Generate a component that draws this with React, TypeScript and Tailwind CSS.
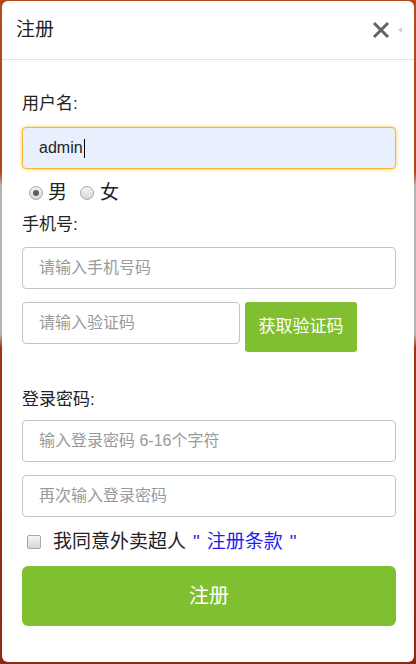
import React from 'react';

const font = "font-['Liberation_Sans','Noto_Sans_CJK_SC',sans-serif]";

const TextInput: React.FC<{ placeholder: string; className?: string }> = ({ placeholder, className }) => (
    <input
        type="text"
        placeholder={placeholder}
        className={`h-[42px] rounded-[4px] border border-[#c4c4c4] bg-white pl-[16px] text-[16px] text-[#333] outline-none placeholder:text-[#9a9a9a] ${className ?? ''}`}
    />
);

const Radio: React.FC<{ checked?: boolean }> = ({ checked }) => (
    <span className="flex h-[14px] w-[14px] items-center justify-center rounded-full border border-[#a8a8a8] bg-[linear-gradient(to_bottom,#f4f4f4,#d8d8d8)]">
        {checked && <span className="h-[6px] w-[6px] rounded-full bg-[#5f5f5f]"></span>}
    </span>
);

const App: React.FC = () => {
    return (
        <div className={`h-[664px] w-[416px] overflow-hidden px-[2px] pt-[1px] pb-[2px] bg-[linear-gradient(to_bottom,#b24b1c_0px,#a9461c_172px,#b4b4b4_186px,#b4b4b4_334px,#9b3518_348px,#8a2a15_664px)] ${font}`}>
            <div className="flex h-[661px] flex-col rounded-[6px] bg-white">
                {/* Header */}
                <div className="flex h-[59px] items-center justify-between border-b border-[#e3e3e3] pl-[14px] pr-[12px]">
                    <span className="text-[19px] text-[#222]">注册</span>
                    <div className="flex items-center gap-[8px]">
                        <svg width="18" height="18" viewBox="0 0 18 18">
                            <path d="M2 2 L16 16 M16 2 L2 16" stroke="#646464" strokeWidth="3" strokeLinecap="butt" />
                        </svg>
                        <svg width="4" height="6" viewBox="0 0 4 6">
                            <path d="M4 0 L0 3 L4 6 Z" fill="#cfcfcf" />
                        </svg>
                    </div>
                </div>

                {/* Form */}
                <div className="flex flex-col pl-[20px] pr-[18px]">
                    <div className="mt-[32px] h-[24px] leading-[24px] text-[17px] text-[#222]">用户名:</div>
                    <div className="mt-[11px] flex h-[42px] items-center rounded-[4px] border border-[#f2b632] bg-[#e8f0fe] pl-[16px] text-[16px] text-[#222] shadow-[0_0_4px_#fbcf5c]">
                        <span>admin</span>
                        <span className="ml-[1px] h-[19px] w-[1px] bg-black"></span>
                    </div>

                    <div className="mt-[12px] flex h-[24px] items-center text-[19px] text-[#222]">
                        <span className="ml-[7px]"><Radio checked /></span>
                        <span className="ml-[5px]">男</span>
                        <span className="ml-[13px]"><Radio /></span>
                        <span className="ml-[6px]">女</span>
                    </div>

                    <div className="mt-[8px] h-[24px] leading-[24px] text-[17px] text-[#222]">手机号:</div>
                    <TextInput placeholder="请输入手机号码" className="mt-[10px] w-full" />

                    <div className="mt-[13px] flex items-start gap-[5px]">
                        <TextInput placeholder="请输入验证码" className="w-[218px]" />
                        <button className="h-[50px] w-[112px] rounded-[3px] bg-[#80bf30] text-[17px] text-white">获取验证码</button>
                    </div>

                    <div className="mt-[36px] h-[24px] leading-[24px] text-[17px] text-[#222]">登录密码:</div>
                    <TextInput placeholder="输入登录密码 6-16个字符" className="mt-[8px] w-full" />
                    <TextInput placeholder="再次输入登录密码" className="mt-[13px] w-full" />

                    <div className="mt-[13px] flex h-[24px] items-center text-[19px]">
                        <span className="ml-[5px] h-[14px] w-[14px] rounded-[2px] border border-[#a8a8a8] bg-[linear-gradient(to_bottom,#f6f6f6,#d6d6d6)]"></span>
                        <span className="ml-[12px] text-[#222]">我同意外卖超人</span>
                        <span className="ml-[7px] flex gap-[7px] text-[#1f1fee]">
                            <span>"</span>
                            <span>注册条款</span>
                            <span>"</span>
                        </span>
                    </div>

                    <button className="mt-[12px] h-[60px] w-full rounded-[6px] bg-[#80bf30] text-[20px] text-white">注册</button>
                </div>
            </div>
        </div>
    );
};

export default App;
